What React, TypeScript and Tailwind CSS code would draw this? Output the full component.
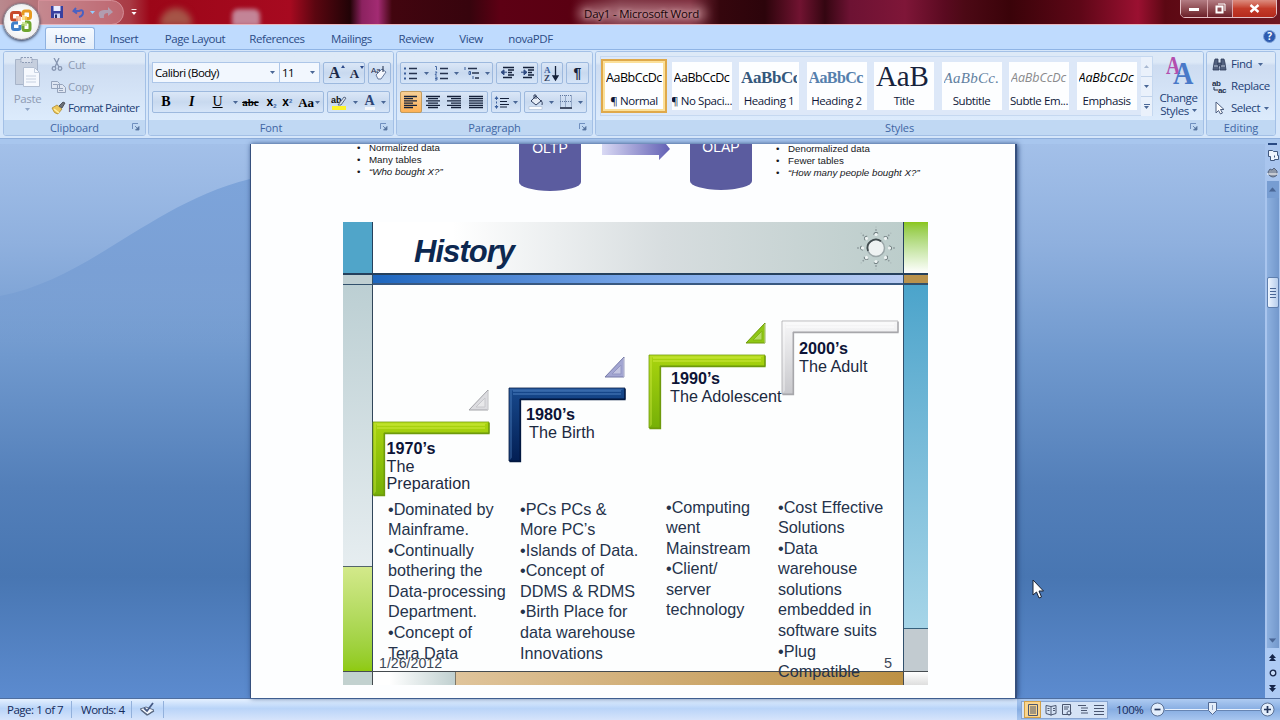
import React from "react";

type Kids = { children?: React.ReactNode; className?: string };

const Caret = ({ className = "" }: { className?: string }) => (
  <svg width="5" height="3" viewBox="0 0 5 3" className={`shrink-0 ${className}`}>
    <path d="M0 0h5L2.5 3z" fill="#4a6796" />
  </svg>
);

const Launcher = () => (
  <svg width="8" height="8" viewBox="0 0 8 8" className="absolute right-[5px] top-[3px]">
    <path d="M.5 6V.5H6" fill="none" stroke="#6f8fbf" />
    <path d="M3 3l3 3M7 3.5V7H3.5z" fill="#55749f" stroke="#55749f" strokeWidth=".8" />
  </svg>
);

const Group = ({ label, launcher, className = "", children }: Kids & { label: string; launcher?: boolean }) => (
  <section
    className={`flex h-[85px] shrink-0 flex-col overflow-hidden rounded-[3px] border border-[#a3c0e6] shadow-[inset_0_0_0_1px_#e3effc] ${className}`}
  >
    <div className="h-[68px] bg-linear-to-b from-[#dde9f7] from-15% via-[#cddcf1] via-20% to-[#dcebfc]">{children}</div>
    <div className="relative h-[15px] bg-[#c0d8f3] text-center text-[11px] leading-[15px] tracking-[-0.1px] text-[#3f66a4]">
      {label}
      {launcher && <Launcher />}
    </div>
  </section>
);

const Box = ({ children, className = "" }: Kids) => (
  <div
    className={`flex h-[22px] shrink-0 items-center justify-around rounded-[2px] border border-[#9db9de] bg-linear-to-b from-[#dbe7f7] via-[#c8d9ef] to-[#d6e5f8] ${className}`}
  >
    {children}
  </div>
);

const Lines = ({ rows, x = 0 }: { rows: number[][]; x?: number }) => (
  <svg width="14" height="14" viewBox="0 0 14 14" className="shrink-0">
    {rows.map(([a, b], i) => (
      <path key={i} d={`M${a + x} ${1.5 + i * 2.2}H${b + x}`} stroke="#15213a" strokeWidth="1.3" />
    ))}
  </svg>
);

const ListIcon = ({ kind }: { kind: "bullet" | "number" | "multi" }) => (
  <svg width="16" height="15" viewBox="0 0 16 15" className="shrink-0">
    {kind === "multi" ? (
      <>
        <path d="M4 2.5h9M8 7h7M11 12h4" stroke="#26334e" strokeWidth="1.3" />
        <path d="M1 1v3M5 5.5h1.5v3H5zM9 10v3" stroke="#3b5f9c" fill="none" />
      </>
    ) : (
      <>
        <path d="M6 2.5h8M6 7.5h8M6 12.5h8" stroke="#26334e" strokeWidth="1.3" />
        {kind === "bullet" ? (
          <path d="M1 1.5h2v2H1zM1 6.5h2v2H1zM1 11.5h2v2H1z" fill="#3b5f9c" />
        ) : (
          <path d="M1 .5h1.5v3.5M1 6h2l-2 3h2M1 11h2v3H1M1 12.5h2" stroke="#3b5f9c" fill="none" strokeWidth=".9" />
        )}
      </>
    )}
  </svg>
);

const IndentIcon = ({ flip }: { flip?: boolean }) => (
  <svg width="15" height="14" viewBox="0 0 15 14" className="shrink-0">
    <path d="M3 1.5h11M8 4h6M8 6.5h4M8 9h6M3 11.5h9" stroke="#15213a" strokeWidth="1.5" />
    <path d={flip ? "M1 6.2h4M4 3.8l3 2.5-3 2.5z" : "M3 6.2h4M4 3.8L1 6.3l3 2.5z"} stroke="#2f4a80" fill="#2f4a80" />
  </svg>
);

const OfficeButton = () => (
  <div className="absolute left-[3px] top-[3px] z-10 size-[37px] rounded-full border border-[#8d8790] bg-radial from-white from-30% via-[#f2f2f3] via-65% to-[#b8bac4] shadow-[0_1px_3px_#26304c]">
    <svg width="27" height="27" viewBox="0 0 27 27" className="ml-[4px] mt-[4px]">
      <g fill="none" strokeWidth="3">
        <path d="M10 12H5.500q-2 0-2-2V6.500q0-2 2-2h5q2 0 2 2V9" stroke="#c8482a" />
        <path d="M15 9V6.500q0-2 2-2h3.500q2 0 2 2V10q0 2-2 2H17" stroke="#e79b20" transform="translate(0 -1.500)" />
        <path d="M10 15H6.500q-2 0-2 2v2.500q0 2 2 2H10q2 0 2-2V17" stroke="#3f7fca" />
        <path d="M15 16v4.500q0 2 2 2h3q2 0 2-2V16q0-2-2-2h-3" stroke="#6fa52f" />
      </g>
      <path d="M8 8h5v5H8z" fill="#f5b28b" opacity=".8" />
      <path d="M14 8h5v4h-5z" fill="#fbd25a" opacity=".7" />
      <path d="M14 14h5v4h-5z" fill="#b9dc77" opacity=".7" />
    </svg>
  </div>
);

const TitleBar = () => (
  <header className="relative flex h-[25px] shrink-0 items-center overflow-hidden border-b border-[#e8b6bd] bg-[linear-gradient(90deg,#b9898e_0,#a93a44_130px,#9c0618_150px,#a70a20_290px,#5b0610_315px,#210306_350px,#8c2260_362px,#a32b73_378px,#42050f_392px,#37040d_470px,#5d0014_500px,#5a0012_570px,#7c3443_620px,#7d2c3d_690px,#35060d_720px,#2c040b_765px,#711331_800px,#340611_825px,#6d1233_850px,#7f1638_905px,#5a0a20_945px,#4c0915_965px,#3a0309_1010px,#5e0717_1080px,#9b1031_1138px,#5c0813_1165px,#701822_1280px)]">
    <div className="absolute left-[160px] top-[8px] h-[18px] w-[32px] rounded-t-full bg-[#a86852]/80 blur-[3px]" />
    <div className="absolute left-[232px] top-[9px] h-[17px] w-[28px] rounded-t-[6px] bg-[#cba4b5]/80 blur-[2px]" />
    <div className="absolute left-[577px] top-[5px] h-[17px] w-[130px] rounded-full bg-[#d6a9ad]/45 blur-[4px]" />
    <div className="ml-[38px] flex h-[25px] w-[86px] items-center rounded-r-full border border-[#d38e97] bg-[#e5b5bd]/35 pl-[11px]">
      <svg width="14" height="14" viewBox="0 0 14 14">
        <path d="M1 1h12v12H1z" fill="#3740a0" />
        <path d="M3.500 1h7v5h-7z" fill="#e9ecff" />
        <path d="M4 8.500h6V13H4z" fill="#cdd3f4" />
        <path d="M5 9.500h2V13H5z" fill="#272d6a" />
      </svg>
      <svg width="13" height="12" viewBox="0 0 13 12" className="ml-[8px]">
        <path d="M4 2L1.500 5 5 7.500M2 5h5q4-2 4 1.500T7 11" fill="none" stroke="#4a61c2" strokeWidth="2" />
      </svg>
      <Caret className="ml-[5px] brightness-200" />
      <svg width="20" height="15" viewBox="0 0 20 15" className="ml-[1px] opacity-60">
        <path d="M4 13q-4-7 4-8h4V2l5 5-5 4V8Q7 8 8 13z" fill="#a8bdd6" />
      </svg>
    </div>
    <svg width="6" height="7" viewBox="0 0 6 7" className="ml-[7px]">
      <path d="M.5.5h5" stroke="#f3dede" />
      <path d="M.5 3h5L3 6z" fill="#fff" />
    </svg>
    <div className="absolute inset-x-0 top-[6px] pl-[3px] text-center text-[11.5px] leading-[15px] tracking-[-0.23px] text-[#190408] [text-shadow:0_0_4px_#eec9cd]">
      Day1 - Microsoft Word
    </div>
    <div className="absolute right-[3px] top-[-1px] flex h-[19px] w-[97px] overflow-hidden rounded-b-[5px] border border-[#e4bfc4] text-white">
      <div className="flex w-[27px] items-center justify-center border-r border-[#d9a5ab] bg-linear-to-b from-[#b37c83] to-[#6c1f29]">
        <div className="mt-[2px] h-[3px] w-[10px] bg-white" />
      </div>
      <div className="flex w-[25px] items-center justify-center border-r border-[#d9a5ab] bg-linear-to-b from-[#b37c83] to-[#6c1f29]">
        <svg width="11" height="11" viewBox="0 0 11 11" fill="none" stroke="#fff">
          <path d="M3 1h7v7" />
          <path d="M1.500 3.500h6v6h-6z" strokeWidth="2" />
        </svg>
      </div>
      <div className="flex flex-1 items-center justify-center bg-linear-to-b from-[#dc8c7f] via-[#c33b29] via-50% to-[#b52a1d]">
        <svg width="11" height="9" viewBox="0 0 11 9">
          <path d="M1.500 1l8 7M9.500 1l-8 7" stroke="#fff" strokeWidth="2.400" />
        </svg>
      </div>
    </div>
  </header>
);

const Tab = ({ children, className = "" }: Kids) => (
  <div className={`h-full shrink-0 text-center leading-[27px] ${className}`}>{children}</div>
);

const Tabs = () => (
  <nav className="flex h-[24px] shrink-0 bg-[#bfdbfe] pl-[45px] text-[11.5px] tracking-[-0.42px] text-[#2c4c86]">
    <Tab className="mt-[2px] !h-[22px] w-[50px] rounded-t-[3px] border border-b-0 border-[#8fb2e0] bg-linear-to-b from-[#f6faff] to-[#e3edf9] !leading-[22px]">Home</Tab>
    <Tab className="w-[58px]">Insert</Tab>
    <Tab className="w-[84px]">Page Layout</Tab>
    <Tab className="w-[80px]">References</Tab>
    <Tab className="w-[69px]">Mailings</Tab>
    <Tab className="w-[60px]">Review</Tab>
    <Tab className="w-[50px]">View</Tab>
    <Tab className="w-[69px]">novaPDF</Tab>
    <div className="ml-auto mr-[4px] mt-[5px] size-[13px] rounded-full border border-[#7ea1d6] bg-[#2d5bb0] text-center text-[10px] font-bold leading-[11px] text-white">?</div>
  </nav>
);

const Clipboard = () => (
  <Group label="Clipboard" launcher className="w-[143px]">
    <div className="flex pt-[3px] text-[11.5px] leading-[22px] tracking-[-0.35px] text-[#8e9bb3]">
      <div className="flex w-[47px] flex-col items-center">
        <svg width="27" height="31" viewBox="0 0 27 31" className="mt-[1px]">
          <path d="M1.500 3.500h22v25h-22z" fill="#c6cfde" stroke="#a7b4c9" />
          <path d="M7 1.500h11v5H7z" fill="#d9e0ec" stroke="#8f9db6" strokeDasharray="2 1" />
          <path d="M9.500 11.500h11l5 5v14h-16z" fill="#f6f9fe" stroke="#b3bfd2" />
          <path d="M20.500 11.500v5h5M12 20h10M12 23h10M12 26h10" fill="none" stroke="#c6d0e0" />
        </svg>
        <span className="mt-[4px] leading-[15px]">Paste</span>
        <Caret className="mt-[2px] opacity-50" />
      </div>
      <div className="-mt-[1px] w-[93px]">
        <div className="flex h-[21.500px] items-center gap-[5px]">
          <svg width="12" height="13" viewBox="0 0 12 13" fill="none" stroke="#8695b0" strokeWidth="1.300">
            <path d="M3 0l5 9M8 0L4 9" /><circle cx="3" cy="10.500" r="1.800" /><circle cx="9" cy="10.500" r="1.800" />
          </svg>
          Cut
        </div>
        <div className="flex h-[22px] items-center gap-[2px]">
          <svg width="15" height="13" viewBox="0 0 15 13" fill="#dfe6f2" stroke="#95a3bb">
            <path d="M.5 1.500h6l2 2v5h-8zM6.500 4.500h5l3 3v5h-8z" /><path d="M2 4.500h4M8 8.500h4M8 10.500h4" />
          </svg>
          Copy
        </div>
        <div className="-mt-px flex h-[22px] items-center gap-[2px] whitespace-nowrap tracking-[-0.66px] text-[#233f76]">
          <svg width="15" height="14" viewBox="0 0 15 14">
            <path d="M1 7l5-3 5 4-4 5q-4 0-6-6z" fill="#ecc75c" stroke="#a88227" strokeWidth=".7" />
            <path d="M3 8l5 4" stroke="#fff1a9" strokeWidth="1.500" />
            <path d="M8 5l4-4 2 1-3 5z" fill="#6c7077" stroke="#3c4049" strokeWidth=".8" />
          </svg>
          Format Painter
        </div>
      </div>
    </div>
  </Group>
);

const FontGroup = () => (
  <Group label="Font" launcher className="w-[246px]">
    <div className="flex pl-[3px] pt-[10px] text-[11.5px] text-black">
      <div className="flex h-[21px] w-[128px] items-center justify-between border border-[#adc6e8] bg-[#f2f7fe] pl-[2px] pr-[4px] tracking-[-0.5px]">
        Calibri (Body) <Caret />
      </div>
      <div className="-ml-px flex h-[21px] w-[41px] items-center justify-between border border-[#adc6e8] bg-[#f2f7fe] pl-[2px] pr-[4px] tracking-[-0.6px]">
        11 <Caret />
      </div>
      <Box className="ml-[3px] w-[42px] font-['Liberation_Serif'] font-bold text-[#1b2947]">
        <span className="relative text-[16px] leading-none">A<i className="absolute -right-[5px] top-0 border-x-[2px] border-b-[3px] border-x-transparent border-b-[#2f4c8a]" /></span>
        <span className="relative text-[13px] leading-none">A<i className="absolute -right-[5px] -top-[1px] border-x-[2px] border-t-[3px] border-x-transparent border-t-[#2f4c8a]" /></span>
      </Box>
      <Box className="ml-[3px] w-[23px]">
        <svg width="17" height="16" viewBox="0 0 17 16">
          <text x="0" y="8" fontSize="8" fontFamily="Liberation Sans" fill="#1b2947">Aa</text>
          <path d="M5 10l6-6 4 3-5 7H7z" fill="#f4f7fd" stroke="#66799d" />
          <path d="M12 1v6" stroke="#1b2947" />
        </svg>
      </Box>
    </div>
    <div className="flex pl-[3px] pt-[7px] text-black">
      <Box className="w-[172px] font-['Liberation_Serif'] text-[14px] font-bold leading-none">
        <span className="w-[20px] text-center">B</span>
        <span className="w-[20px] text-center italic">I</span>
        <span className="w-[20px] text-center font-normal underline">U</span>
        <Caret />
        <span className="mx-[2px] -ml-[2px] text-[11px] line-through">abc</span>
        <span className="font-['Liberation_Sans'] text-[12px]">x<sub className="text-[6px] text-[#3f66a4]">2</sub></span>
        <span className="font-['Liberation_Sans'] text-[12px]">x<sup className="text-[6px] text-[#3f66a4]">2</sup></span>
        <span className="flex items-center gap-px text-[13px]">Aa<Caret /></span>
      </Box>
      <Box className="ml-[3px] w-[63px]">
        <svg width="16" height="16" viewBox="0 0 16 16">
          <path d="M1 12h14v4H1z" fill="#fdf32b" />
          <text x="0" y="9" fontSize="9" fontWeight="bold" fontFamily="Liberation Sans" fill="#111">ab</text>
          <path d="M7 11l6-8 2 1-5 7z" fill="#dbe3ee" stroke="#5a6a86" />
        </svg>
        <Caret />
        <span className="border-b-[3px] border-[#f3f6fb] font-['Liberation_Serif'] text-[14px] font-bold leading-[12px] text-[#2c4475]">A</span>
        <Caret />
      </Box>
    </div>
  </Group>
);

const Paragraph = () => (
  <Group label="Paragraph" launcher className="w-[197px]">
    <div className="flex gap-[3px] pl-[3px] pt-[10px]">
      <Box className="w-[93px]">
        <ListIcon kind="bullet" /><Caret /><ListIcon kind="number" /><Caret /><ListIcon kind="multi" /><Caret />
      </Box>
      <Box className="w-[42px]"><IndentIcon /><IndentIcon flip /></Box>
      <Box className="w-[22px]">
        <svg width="16" height="17" viewBox="0 0 16 17">
          <text x="0" y="8" fontSize="9" fontFamily="Liberation Serif" fontWeight="bold" fill="#3b5f9c">A</text>
          <text x="0" y="16" fontSize="9" fontFamily="Liberation Serif" fontWeight="bold" fill="#33415f">Z</text>
          <path d="M11.500 1v12M9 11l2.500 4 2.500-4z" stroke="#15213a" fill="#15213a" strokeWidth="1.300" />
        </svg>
      </Box>
      <Box className="w-[23px] font-['Liberation_Sans'] text-[14px] font-bold text-[#15213a]">¶</Box>
    </div>
    <div className="flex gap-[3px] pl-[3px] pt-[7px]">
      <Box className="w-[88px] !justify-start">
        <div className="-ml-px flex h-[22px] w-[22px] items-center justify-center rounded-[2px] border border-[#c29b5c] bg-linear-to-b from-[#f7cf95] to-[#fdb155]">
          <Lines rows={[[0, 13], [0, 9], [0, 13], [0, 9], [0, 13], [0, 9]]} />
        </div>
        <div className="flex flex-1 items-center justify-around">
          <Lines rows={[[0, 14], [2, 12], [0, 14], [2, 12], [0, 14], [2, 12]]} />
          <Lines rows={[[0, 14], [4, 14], [0, 14], [4, 14], [0, 14], [4, 14]]} />
          <Lines rows={[[0, 14], [0, 14], [0, 14], [0, 14], [0, 14], [0, 14]]} />
        </div>
      </Box>
      <Box className="w-[30px]">
        <svg width="16" height="15" viewBox="0 0 16 15">
          <path d="M6 3.500h9M6 6.500h7M6 9.500h9M6 12h7" stroke="#15213a" strokeWidth="1.200" />
          <path d="M2.500 1L.5 4h4zM2.500 14l-2-3h4z" fill="#3b5f9c" /><path d="M2.500 3v9" stroke="#3b5f9c" strokeDasharray="2 1.500" />
        </svg>
        <Caret />
      </Box>
      <Box className="w-[63px]">
        <svg width="16" height="16" viewBox="0 0 16 16">
          <path d="M3 7l5-5 5 5-5 4z" fill="#e7edf6" stroke="#33415f" /><path d="M6 5V1h2v4M13 6q2 3 1 5" fill="none" stroke="#33415f" />
          <path d="M1 12.500h13v3H1z" fill="#fafcff" stroke="#9fb0ca" strokeWidth=".5" />
        </svg>
        <Caret />
        <svg width="14" height="14" viewBox="0 0 14 14" stroke="#6078a0" fill="none">
          <path d="M1.500.5v12M6.500.5v12M12.500.5v12M1 .5h12M1 6.500h12" strokeDasharray="1 1" /><path d="M1 13h12" stroke="#15213a" strokeWidth="1.500" />
        </svg>
        <Caret />
      </Box>
    </div>
  </Group>
);

const styleTiles = [
  { name: "¶ Normal", sample: "AaBbCcDc", cls: "items-center leading-[34px] font-['Open_Sans'] text-[12.5px] tracking-[-0.45px] text-black" },
  { name: "¶ No Spaci...", sample: "AaBbCcDc", cls: "items-center leading-[34px] font-['Open_Sans'] text-[12.5px] tracking-[-0.45px] text-black" },
  { name: "Heading 1", sample: "AaBbCc", cls: "items-center leading-[34px] font-['Liberation_Serif'] text-[17px] font-bold tracking-[-0.4px] text-[#34587c]" },
  { name: "Heading 2", sample: "AaBbCc", cls: "items-center leading-[34px] font-['Liberation_Serif'] text-[16px] font-bold tracking-[-0.6px] text-[#5680ad]" },
  { name: "Title", sample: "AaB", cls: "items-start leading-[26px] font-['Liberation_Serif'] text-[29px] tracking-[-0.2px] text-[#17233c]" },
  { name: "Subtitle", sample: "AaBbCc.", cls: "items-center leading-[34px] font-['Liberation_Serif'] text-[15px] italic tracking-[0.3px] text-[#61809f]" },
  { name: "Subtle Em...", sample: "AaBbCcDc", cls: "items-center leading-[34px] font-['Open_Sans'] text-[12.5px] italic tracking-[-0.1px] text-[#8a8a8c]" },
  { name: "Emphasis", sample: "AaBbCcDc", cls: "items-center leading-[34px] font-['Open_Sans'] text-[12.5px] italic tracking-[-0.1px] text-black" },
];

const Styles = () => (
  <Group label="Styles" launcher className="w-[609px]">
    <div className="flex pl-[4px] pt-[4px]">
      <div className="flex h-[60px] w-[553px] border border-[#c5d8f0] bg-[#dde8f8] pt-[2px]">
        {styleTiles.map((t, i) => (
          <div
            key={t.name}
            className={`mr-[1.500px] flex h-[54px] w-[66px] shrink-0 flex-col items-center overflow-hidden bg-[#fdfeff] ${
              i === 0 ? "border-2 border-[#dfa94a] px-px pt-px shadow-[inset_0_0_0_2px_#fbe09a]" : "border-[3px] border-[#dde8f8]"
            }`}
          >
            <div className={`flex h-[31px] w-[56px] shrink-0 overflow-hidden whitespace-nowrap pt-px ${t.cls}`}>{t.sample}</div>
            <div className="whitespace-nowrap text-[11.5px] leading-[15px] tracking-[-0.4px] text-[#0e1738]">{t.name}</div>
          </div>
        ))}
        <div className="-mt-[2px] ml-auto flex h-[59px] w-[12px] flex-col divide-y divide-[#c0d2ea] bg-[#eaf1fb]">
          <div className="flex flex-1 items-center justify-center"><Caret className="rotate-180 opacity-40" /></div>
          <div className="flex flex-1 items-center justify-center"><Caret /></div>
          <div className="flex flex-1 flex-col items-center justify-center gap-px"><i className="h-px w-[6px] bg-[#4a6796]" /><Caret /></div>
        </div>
      </div>
      <div className="flex w-[48px] flex-col items-center pl-[3px] text-[11.5px] leading-[13px] tracking-[-0.4px] text-[#233f76]">
        <svg width="30" height="32" viewBox="0 0 30 32" className="mb-[3px]" fontFamily="Liberation Serif" fontWeight="bold">
          <text x="2" y="18" fontSize="25" fill="#b34fae" textLength="14" lengthAdjust="spacingAndGlyphs">A</text>
          <text x="9" y="28" fontSize="31" fill="#4a79c8" textLength="20" lengthAdjust="spacingAndGlyphs">A</text>
        </svg>
        <span>Change</span>
        <span className="flex items-center gap-[3px]">Styles <Caret /></span>
      </div>
    </div>
  </Group>
);

const Editing = () => (
  <Group label="Editing" className="w-[70px]">
    <div className="flex flex-col pl-[5px] pt-[1px] text-[11.5px] tracking-[-0.45px] text-[#233f76] [&>div]:flex [&>div]:h-[22px] [&>div]:items-center [&>div]:gap-[4px]">
      <div>
        <svg width="15" height="13" viewBox="0 0 15 13" fill="#51607e" stroke="#2d3a58" strokeWidth=".8">
          <path d="M3 1h3v4l1 7H1l1-7zM9 1h3l1 4 1 7H8l1-7z" /><path d="M6 5h3v3H6z" /><path d="M2 8h4M9 8h4" stroke="#d5dfef" />
        </svg>
        Find <Caret className="ml-[2px]" />
      </div>
      <div>
        <svg width="15" height="14" viewBox="0 0 15 14" fontFamily="Liberation Sans" fontWeight="bold" fontSize="8" fill="#25314c">
          <text x="0" y="7">ab</text><text x="6" y="14">ac</text><path d="M2 8v3h4" fill="none" stroke="#25314c" />
        </svg>
        Replace
      </div>
      <div>
        <svg width="15" height="14" viewBox="0 0 15 14">
          <path d="M4 1v11l2.500-2.500L8.500 13l2-1-2-3.500H12z" fill="#fff" stroke="#4d5f80" />
        </svg>
        Select <Caret />
      </div>
    </div>
  </Group>
);

const Sun = () => (
  <svg width="40" height="46" viewBox="-20 -23 40 46" className="absolute right-[7px] top-[3px]">
    {[0, 45, 90, 135, 180, 225, 270, 315].map((a) => (
      <g key={a} transform={`rotate(${a})`}>
        <path d="M-2 -13A2.200 2.200 0 0 1 2 -14.500" fill="none" stroke="#6f7c7f" strokeWidth="1.200" />
        <circle cx="0" cy="-13.500" r="1.600" fill="#eef3f3" />
        <circle cx="0" cy="-18" r=".9" fill="#8f9c9e" />
        <circle cx="0" cy="-21" r=".6" fill="#a3afb0" />
      </g>
    ))}
    <circle r="8.500" fill="#eef2f2" stroke="#9aa6a8" strokeWidth="1.500" />
    <path d="M-8 3A8.500 8.500 0 0 1 5 -6.800" fill="none" stroke="#434d50" strokeWidth="1.800" />
  </svg>
);

const Angle = ({ id, className, c }: { id: string; className: string; c: string[] }) => (
  <svg width="118" height="76" viewBox="0 0 118 76" className={`absolute ${className}`}>
    <defs>
      <linearGradient id={id} x1="0" y1="0" x2="0" y2="1">
        <stop offset="0" stopColor={c[0]} /><stop offset="1" stopColor={c[1]} />
      </linearGradient>
    </defs>
    <path d="M1 1h116v11H12v62H1z" fill={`url(#${id})`} stroke={c[2]} strokeWidth=".8" />
    <path d="M5 4h108M5 7h108" stroke={c[3]} strokeWidth="1" opacity=".8" />
    <path d="M1.500 1.500h115l-4 2H4v67l-2.500 3z" fill={c[3]} opacity=".35" />
    <path d="M117 2v10.500H12.500v62H1.500" fill="none" stroke={c[2]} strokeWidth="1.300" />
  </svg>
);

const Triangle = ({ className, fill, edge }: { className: string; fill: string; edge: string }) => (
  <svg width="22" height="23" viewBox="0 0 22 23" className={`absolute ${className}`}>
    <path d="M20 1v20H1z" fill={fill} stroke={edge} />
    <path d="M17 9v9H8z" fill="#fff" opacity=".35" stroke={edge} />
    <path d="M20 2v19" stroke="#fff" opacity=".6" />
  </svg>
);

const Bullets = ({ lines, className }: { lines: string[]; className: string }) => (
  <div className={`absolute whitespace-nowrap text-[16.200px] leading-[20.580px] text-[#25334b] ${className}`}>
    {lines.map((l) => <div key={l}>{l}</div>)}
  </div>
);

const Era = ({ year, text, className }: { year: string; text: string[]; className: string }) => (
  <div className={`absolute whitespace-nowrap text-[16.200px] leading-[17.500px] text-[#1c2940] ${className}`}>
    <b className="block text-[#0d1437]">{year}</b>
    {text.map((l) => <div key={l}>{l}</div>)}
  </div>
);

const green = ["#a9d40e", "#76b007", "#6e9a0c", "#d9f04a"];

const Slide = () => (
  <article className="relative ml-[92px] mt-[29px] grid h-[463px] w-[585px] grid-cols-[30px_530px_25px] grid-rows-[53px_10px_386px_14px]">
    <div className="border-b-2 border-r border-[#25405c] bg-[#50a5c9]" />
    <div className="relative border-b-2 border-[#25405c] bg-linear-to-r from-white from-15% via-[#d7dddf] via-55% to-[#bccdcb]">
      <h1 className="ml-[41px] mt-[12px] text-[31px] font-bold italic leading-[36px] tracking-[-0.950px] text-[#0d2850]">History</h1>
      <Sun />
    </div>
    <div className="border-b-2 border-l border-[#25405c] bg-linear-to-b from-[#8bc617] to-white" />

    <div className="border-b border-r border-[#31506c] bg-[#bfcfd2]" />
    <div className="border-b-2 border-[#395981] bg-linear-to-r from-[#1c66be] via-[#78a6e8] via-50% to-[#bacdf3]" />
    <div className="border-b-2 border-l border-[#31506c] bg-[#b9924c]" />

    <div className="flex flex-col border-r border-[#31465a]">
      <div className="h-[282px] border-b border-[#53656b] bg-linear-to-b from-[#bccfd3] to-[#e6edf0]" />
      <div className="flex-1 bg-linear-to-b from-[#d3e98a] to-[#8fca0d]" />
    </div>
    <div className="bg-[#fdfefe]" />
    <div className="flex flex-col border-l border-[#31506c]">
      <div className="h-[344px] border-b border-[#36607c] bg-linear-to-b from-[#4ba4cb] to-[#a6d5e8]" />
      <div className="flex-1 bg-[#c2cbd0]" />
    </div>

    <div className="border-r border-t border-[#454b50] bg-[#c2d1cf]" />
    <div className="flex border-t border-[#454b50]">
      <div className="w-[83px] border-r border-[#7c7768] bg-linear-to-r from-white from-20% to-[#c0d0d0]" />
      <div className="flex-1 bg-linear-to-r from-[#dfc49b] to-[#bd9144]" />
    </div>
    <div className="border-l border-t border-[#454b50] bg-linear-to-b from-white to-[#dedede]" />

    <Angle id="g1" className="left-[29px] top-[199px]" c={green} />
    <Angle id="g2" className="left-[165px] top-[165px]" c={["#17498d", "#031f54", "#021840", "#5a8dcc"]} />
    <Angle id="g3" className="left-[305px] top-[132px]" c={green} />
    <Angle id="g4" className="left-[438px] top-[98px]" c={["#f7f7f8", "#c8c8cc", "#a7a7ab", "#ffffff"]} />
    <Triangle className="left-[125px] top-[167px]" fill="#dcdce0" edge="#a3a3a8" />
    <Triangle className="left-[261px] top-[134px]" fill="#a3a6d2" edge="#777ba8" />
    <Triangle className="left-[402px] top-[100px]" fill="#8fc714" edge="#6f980c" />

    <Era year="1970’s" text={["The", "Preparation"]} className="left-[43.500px] top-[218px]" />
    <Era year="1980’s" text={["The Birth"]} className="left-[183px] top-[184px] [&>div]:pl-[3px]" />
    <Era year="1990’s" text={["The Adolescent"]} className="left-[328px] top-[148px] [&>div]:-ml-px" />
    <Era year="2000’s" text={["The Adult"]} className="left-[456px] top-[118px]" />

    <Bullets className="left-[45px] top-[276.500px]" lines={["•Dominated by", "Mainframe.", "•Continually", "bothering the", "Data-processing", "Department.", "•Concept of", "Tera Data"]} />
    <Bullets className="left-[177px] top-[276.500px]" lines={["•PCs PCs &", "More PC’s", "•Islands of Data.", "•Concept of", "DDMS & RDMS", "•Birth Place for", "data warehouse", "Innovations"]} />
    <Bullets className="left-[323px] top-[274.500px]" lines={["•Computing", "went", "Mainstream", "•Client/", "server", "technology"]} />
    <Bullets className="left-[435px] top-[274.500px]" lines={["•Cost Effective", "Solutions", "•Data", "warehouse", "solutions", "embedded in", "software suits", "•Plug", "Compatible"]} />
    <div className="absolute left-[36px] top-[432px] text-[14.200px] leading-[18px] text-[#3c4757]">1/26/2012</div>
    <div className="absolute left-[541px] top-[432px] text-[14.500px] leading-[18px] text-[#3c4757]">5</div>
  </article>
);

const SmallList = ({ items, className }: { items: string[]; className: string }) => (
  <ul className={`shrink-0 whitespace-nowrap text-[9.750px] leading-[12.200px] text-[#17181c] ${className}`}>
    {items.map((t, i) => (
      <li key={t} className="flex">
        <span className="w-[12px]">•</span>
        <span className={i === 2 ? "italic" : ""}>{t}</span>
      </li>
    ))}
  </ul>
);

const Cylinder = ({ label, className }: { label: string; className: string }) => (
  <div className={`h-[57px] w-[62px] shrink-0 rounded-b-[50%_9px] bg-[#5b5c9f] pt-[6px] text-center text-[14px] leading-[16px] text-white ${className}`}>
    {label}
  </div>
);

const Page = () => (
  <main className="h-full w-[767px] shrink-0 overflow-hidden border-l border-r-2 border-[#36507e] bg-[#fdfeff] font-['Liberation_Sans',sans-serif] shadow-[1px_0_5px_#2c4a7c]">
    <div className="-mt-[10px] flex h-[59px]">
      <SmallList className="ml-[106px] mt-[7.500px] w-[162px]" items={["Normalized data", "Many tables", "“Who bought X?”"]} />
      <Cylinder label="OLTP" className="" />
      <svg width="70" height="30" viewBox="0 0 70 30" className="ml-[20px] shrink-0">
        <defs>
          <linearGradient id="arrow"><stop offset="0" stopColor="#d9d9f4" /><stop offset="1" stopColor="#6260b4" /></linearGradient>
        </defs>
        <path d="M1 5h56V0l12 15-11 11v-5H1z" fill="url(#arrow)" />
      </svg>
      <Cylinder label="OLAP" className="ml-[19px] -mt-px" />
      <SmallList className="ml-[24px] mt-[8.500px]" items={["Denormalized data", "Fewer tables", "“How many people bought X?”"]} />
    </div>
    <Slide />
  </main>
);

const ScrollBar = () => (
  <aside className="ml-auto flex w-[15px] shrink-0 flex-col items-center bg-[#a9c5ee]">
    <div className="mt-[-1px] h-[2px] w-[9px] shrink-0 bg-[#294a83]" />
    <svg width="12" height="12" viewBox="0 0 12 12" className="mt-[4px] shrink-0" fill="#eef4fd" stroke="#41587e">
      <path d="M1.500 1.500h4l1 1h4v4h1v4h-4v1h-4v-4h-2z" /><path d="M7.500 6.500v2" />
    </svg>
    <svg width="13" height="13" viewBox="0 0 13 13" className="mt-[5px] shrink-0">
      <path d="M2 6l2-3 2 1 2-2 3 3v4q-4 4-8 0z" fill="#8d97a8" stroke="#566580" /><path d="M1 8h11" stroke="#fff" />
    </svg>
    <div className="mt-[2px] flex w-[12px] flex-1 flex-col items-center bg-linear-to-r from-[#8db0df] to-[#7398cc]">
      <div className="flex h-[17px] w-full items-center justify-center bg-[#779dd2]"><Caret className="rotate-180 scale-150" /></div>
      <div className="mt-[79px] flex h-[31px] w-[12px] flex-col items-center justify-center gap-[2px] rounded-[2px] border border-[#5f7fae] bg-linear-to-r from-[#eef5fe] to-[#b6cdec]">
        <i className="h-px w-[6px] bg-[#4a6796]" /><i className="h-px w-[6px] bg-[#4a6796]" /><i className="h-px w-[6px] bg-[#4a6796]" /><i className="h-px w-[6px] bg-[#4a6796]" />
      </div>
      <div className="mt-auto flex h-[15px] w-full items-center justify-center"><Caret className="scale-150" /></div>
    </div>
    <div className="flex h-[50px] w-full flex-col items-center justify-around bg-[#aecbf4] py-[2px]">
      <svg width="7" height="8" viewBox="0 0 7 8" fill="#17264a"><path d="M3.500 0L7 4H0zM3.500 3L7 7H0z" /></svg>
      <svg width="8" height="8" viewBox="0 0 8 8"><circle cx="4" cy="4" r="2.800" fill="#c7dbf6" stroke="#17264a" strokeWidth="1.300" /></svg>
      <svg width="7" height="8" viewBox="0 0 7 8" fill="#17264a"><path d="M3.500 5L7 1H0zM3.500 8L7 4H0z" /></svg>
    </div>
  </aside>
);

const ViewIcon = ({ d }: { d: string }) => (
  <svg width="12" height="12" viewBox="0 0 12 12" fill="none" stroke="#4a5670"><path d={d} /></svg>
);

const ZoomButton = ({ d }: { d: string }) => (
  <svg width="15" height="15" viewBox="0 0 15 15" className="shrink-0">
    <circle cx="7.500" cy="7.500" r="6.500" fill="#e3eefc" stroke="#5b7093" /><path d={d} stroke="#24365c" strokeWidth="1.700" />
  </svg>
);

const StatusBar = () => (
  <footer className="flex h-[22px] shrink-0 items-center border-t border-[#4f6e9f] bg-linear-to-b from-[#e4f0ff] via-[#b9d4f8] via-45% to-[#d6e4fb] text-[11.5px] tracking-[-0.48px] text-[#142a5a]">
    <div className="h-[17px] w-[72px] border-r border-[#93b1dc] pl-[7px] leading-[17px]">Page: 1 of 7</div>
    <div className="h-[17px] w-[60px] border-r border-[#93b1dc] pl-[9px] leading-[17px]">Words: 4</div>
    <div className="flex h-[17px] w-[32px] items-center justify-center border-r border-[#93b1dc]">
      <svg width="17" height="15" viewBox="0 0 17 15">
        <path d="M1 7l6-2 8 3-6 5z" fill="#f4f7fc" stroke="#66758f" /><path d="M2 8l6 5 7-4" fill="none" stroke="#59677f" strokeWidth="1.300" />
        <path d="M5 6l3 3 6-8" fill="none" stroke="#465a85" strokeWidth="1.800" />
      </svg>
    </div>
    <div className="ml-auto flex h-full w-[263px] shrink-0 items-center bg-linear-to-b from-[#aecbf2] via-[#87ade2] via-50% to-[#a8c6ef] pl-[4px]">
      <div className="flex h-[18px] w-[87px] items-center justify-around border border-[#87a5d2] bg-[#d5e3f6]">
        <div className="flex h-[17px] w-[17px] items-center justify-center border border-[#d09f48] bg-[#fbd58c]">
          <ViewIcon d="M1.500.5h9v11h-9zM3 3h6M3 5h6M3 7h6M3 9h6" />
        </div>
        <ViewIcon d="M1 1.500l5 1 5-1v8l-5 1.500-5-1.500zM6 2.500v9M2.500 4.500h2M2.500 6.500h2M8 4.500h2M8 6.500h2" />
        <ViewIcon d="M1.500.5h8v10h-8zM3 3h5M3 5h4M8 7a2 2 0 1 0 .1 0z" />
        <ViewIcon d="M1 1.500h8M4 4h7M4 6.500h6M4 9h7" />
        <ViewIcon d="M1 1.500h10M1 4.500h10M1 7.500h10M1 10.500h10" />
      </div>
      <span className="ml-[8px] w-[34px] shrink-0">100%</span>
      <ZoomButton d="M4.500 7.500h6" />
      <div className="relative h-px w-[95px] shrink-0 bg-[#e8f1fd] shadow-[0_1px_0_#6785b3]">
        <svg width="9" height="13" viewBox="0 0 9 13" className="absolute left-[43px] top-[-7px]">
          <path d="M.5.500h8v8l-4 4-4-4z" fill="#e4edf9" stroke="#526a94" /><path d="M4.500 3v5" stroke="#8ba0c2" />
        </svg>
      </div>
      <ZoomButton d="M4 7.500h7M7.500 4v7" />
    </div>
  </footer>
);

export default function App() {
  return (
    <div className="relative flex h-[720px] w-[1280px] flex-col overflow-hidden bg-[#bfdbfe] font-['Open_Sans','Noto_Sans',sans-serif]">
      <OfficeButton />
      <TitleBar />
      <Tabs />
      <div className="flex h-[89px] shrink-0 gap-[2px] border-t border-[#8fb4e5] bg-[#d5e6fa] pl-[3px] pt-px">
        <Clipboard />
        <FontGroup />
        <Paragraph />
        <Styles />
        <Editing />
      </div>
      <div className="h-[6px] shrink-0 border-t border-[#8eaedb] bg-[#a8c6ee]" />
      <div className="relative flex min-h-0 flex-1 bg-[linear-gradient(180deg,#a3c0e9_0%,#8fb0de_18%,#7099ce_38%,#537fb9_62%,#4876b2_78%,#5c8bcf_100%)]">
        <svg width="250" height="220" viewBox="0 0 250 220" className="absolute left-0 top-0">
          <defs>
            <linearGradient id="wave" x1="0" y1="0" x2="0" y2="1">
              <stop offset="0" stopColor="#7da4da" /><stop offset=".5" stopColor="#7aa0d5" /><stop offset="1" stopColor="#7099ce" stopOpacity="0" />
            </linearGradient>
          </defs>
          <path d="M0 152C90 135 150 60 250 35V220H0z" fill="url(#wave)" />
        </svg>
        <div className="relative ml-[250px] h-full"><Page /></div>
        <svg width="12" height="20" viewBox="0 0 12 20" className="absolute left-[1032px] top-[435px]">
          <path d="M1 1v15l3.500-3 2.500 6 2.500-1L7 12h4.500z" fill="#fff" stroke="#1b2333" />
        </svg>
        <ScrollBar />
      </div>
      <StatusBar />
    </div>
  );
}
